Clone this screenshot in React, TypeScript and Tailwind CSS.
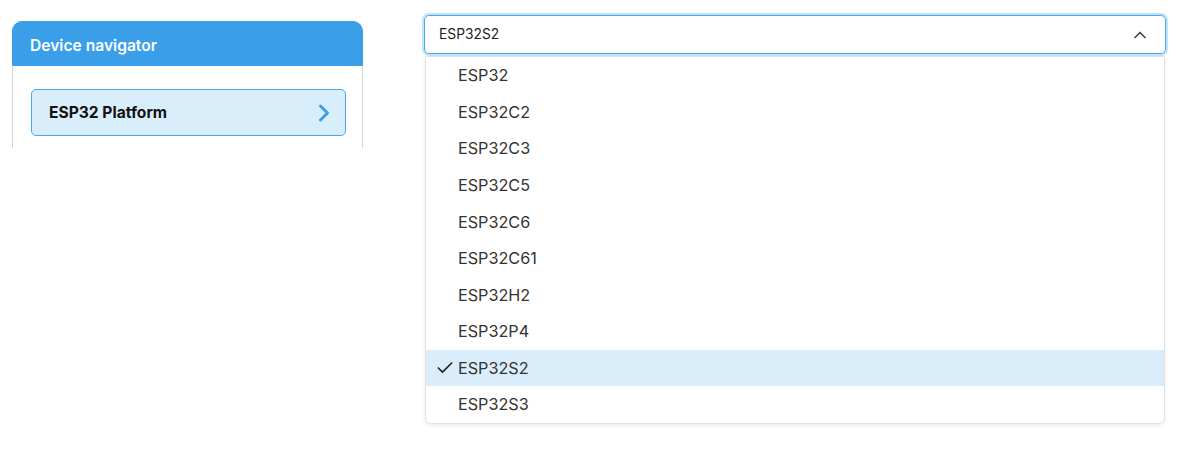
import { Check, ChevronRight, ChevronUp } from "lucide-react";

const chips = [
  "ESP32",
  "ESP32C2",
  "ESP32C3",
  "ESP32C5",
  "ESP32C6",
  "ESP32C61",
  "ESP32H2",
  "ESP32P4",
  "ESP32S2",
  "ESP32S3",
];

const selected = "ESP32S2";

export default function App() {
  return (
    <div className="flex h-[451px] w-[1192px] items-start bg-white font-['Inter',sans-serif]">
      {/* Device navigator card */}
      <div className="ml-3 mt-[21px] w-[351px]">
        <div className="flex h-[45px] items-center rounded-t-[10px] border border-[#3a9fe6] bg-[#3a9fe8] px-[17px] pt-[4px] text-[15.6px] font-semibold text-white">
          Device navigator
        </div>
        <div className="h-[82px] border-x border-[#d4d4d4] pl-[18px] pr-[16px] pt-[23px]">
          <button className="flex h-[47px] w-full items-center justify-between rounded-[5px] border border-[#4aa8e8] bg-[#d9eefb] pl-[17px] pr-[7px] text-[15.6px] font-bold text-[#111]">
            <span>ESP32 Platform</span>
            <ChevronRight className="h-7 w-7 text-[#3a9fe8]" strokeWidth={2.6} />
          </button>
        </div>
      </div>

      {/* Select */}
      <div className="ml-[61px] mt-[15px] w-[742px]">
        <div className="flex h-[39px] items-center justify-between rounded-[5px] border border-[#4aa8e6] pl-[14px] pr-[15px] text-[13.8px] text-[#222] shadow-[0_0_0_2px_#bfe3f8]">
          <span>{selected}</span>
          <ChevronUp className="h-5 w-5 text-[#444]" strokeWidth={2} />
        </div>
        <ul className="mx-px mt-[2px] rounded-b-[6px] border border-[#e2e2e2] bg-white shadow-[0_2px_4px_rgba(0,0,0,0.08)]">
          {chips.map((chip) => (
            <li
              key={chip}
              className={`flex h-[36.6px] items-center text-[16.2px] text-[#333] ${
                chip === selected ? "bg-[#d9eefa]" : ""
              }`}
            >
              <span className="flex w-[32px] justify-end pr-[3px]">
                {chip === selected && <Check className="h-5 w-5 text-[#222]" strokeWidth={2} />}
              </span>
              {chip}
            </li>
          ))}
        </ul>
      </div>
    </div>
  );
}
